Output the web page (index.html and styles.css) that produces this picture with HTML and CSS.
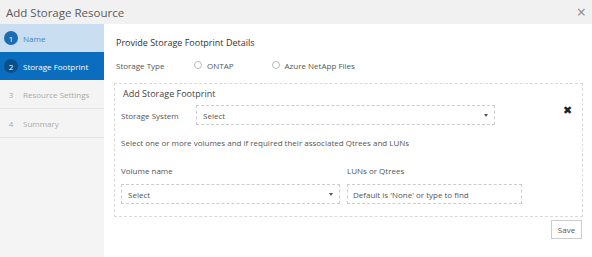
FILE: index.html
```html
<!DOCTYPE html>
<html lang="en">
<head>
    <meta charset="UTF-8">
    <title>Add Storage Resource</title>
    <link rel="stylesheet" href="styles.css">
</head>
<body>
<div class="dialog">
    <div class="head">
        <span class="title">Add Storage Resource</span>
        <span class="close">&times;</span>
    </div>
    <div class="wrap">
        <ul class="steps">
            <li class="done"><span class="num">1</span>Name</li>
            <li class="active"><span class="num">2</span>Storage Footprint</li>
            <li><span class="num">3</span>Resource Settings</li>
            <li><span class="num">4</span>Summary</li>
        </ul>
        <div class="main">
            <h2>Provide Storage Footprint Details</h2>
            <div class="type">
                <span class="lbl">Storage Type</span>
                <label class="radio"><i></i>ONTAP</label>
                <label class="radio"><i></i>Azure NetApp Files</label>
            </div>
            <div class="panel">
                <div class="panel-in">
                    <h3>Add Storage Footprint</h3>
                    <div class="sys">
                        <span class="lbl2">Storage System</span>
                        <div class="select wide">Select<b></b></div>
                    </div>
                    <p class="note">Select one or more volumes and if required their associated Qtrees and LUNs</p>
                    <div class="cols">
                        <div class="col1">
                            <div class="cap">Volume name</div>
                            <div class="select">Select<b></b></div>
                        </div>
                        <div class="col2">
                            <div class="cap">LUNs or Qtrees</div>
                            <div class="input">Default is 'None' or type to find</div>
                        </div>
                    </div>
                </div>
                <span class="remove">&#10006;</span>
            </div>
            <div class="foot"><button class="save">Save</button></div>
        </div>
    </div>
</div>
</body>
</html>
```

FILE: styles.css
```css
*{margin:0;padding:0;list-style:none;box-sizing:border-box;}
body{font-family:"Open Sans",sans-serif;color:#333;background:#fff;}

.dialog{width:592px;height:257px;display:flex;flex-direction:column;}
.head{height:24px;background:#f1f1f1;display:flex;align-items:center;justify-content:space-between;padding:0 6px 0 6px;}
.title{font-size:11.5px;color:#5a5a5a;}
.close{font-size:16px;color:#8a8a8a;line-height:1;}

.wrap{flex:1;display:flex;}
.steps{width:104px;background:#f4f4f4;}
.steps li{height:28px;display:flex;align-items:center;padding-left:4px;font-size:8px;color:#aaa;border-bottom:1px solid #e4e4e4;}
.steps li + li + li{height:29px;}
.steps .num{width:14px;height:14px;border-radius:50%;display:inline-flex;align-items:center;justify-content:center;font-size:8px;margin-right:5px;}
.steps li.done{background:#c9def1;color:#3d82c4;border-bottom:none;}
.steps li.done .num{background:#1c6cb4;color:#fff;}
.steps li.active{background:#0a6dbd;color:#fff;border-bottom:none;}
.steps li.active .num{background:#0a4f8a;color:#fff;}

.main{flex:1;padding:13px 9px 0 10px;}
h2{font-size:9px;line-height:12px;font-weight:normal;color:#333;margin-left:2px;}
.type{display:flex;align-items:center;height:12px;margin-top:10px;margin-left:2px;font-size:8px;color:#555;}
.lbl{width:78px;}
.radio{display:flex;align-items:center;margin-right:38px;}
.radio i{width:8px;height:8px;border:1px solid #bbb;border-radius:50%;margin-right:5px;}

.panel{margin-top:12px;height:134px;border:1px dashed #d8dcd8;display:flex;justify-content:space-between;padding:4px 10px 0 6px;}
h3{font-size:9px;line-height:12px;font-weight:normal;color:#444;margin-left:2px;}
.sys{display:flex;align-items:center;margin-top:5px;font-size:8px;color:#555;}
.lbl2{width:75px;}
.select{height:20px;border:1px dashed #ccc;display:flex;align-items:center;justify-content:space-between;padding:0 6px;font-size:8px;color:#555;}
.select b{width:0;height:0;border-left:2px solid transparent;border-right:2px solid transparent;border-top:3px solid #555;}
.wide{width:299px;}
.note{font-size:8px;line-height:11px;color:#555;margin-top:12px;}
.cols{display:flex;margin-top:17px;}
.cap{font-size:8px;line-height:11px;color:#555;margin-bottom:8px;}
.col1 .select{width:219px;}
.col2{margin-left:7px;}
.input{width:175px;height:20px;border:1px dashed #ccc;display:flex;align-items:center;padding:0 5px;font-size:8px;color:#555;}
.remove{font-size:11px;color:#222;margin-top:14px;}

.foot{display:flex;justify-content:flex-end;margin-top:3px;padding-right:1px;}
.save{font-family:"Open Sans",sans-serif;font-size:8px;color:#555;background:#fff;border:1px solid #ccc;width:31px;height:19px;}
```
